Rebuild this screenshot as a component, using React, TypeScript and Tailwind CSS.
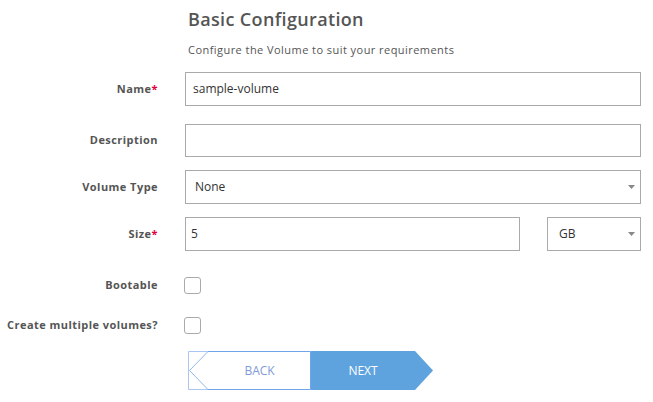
import React from "react";

const font = { fontFamily: '"Open Sans", "Noto Sans", sans-serif' };

function Label({ text, required }: { text: string; required?: boolean }) {
  return (
    <div className="w-[158px] shrink-0 text-right text-[11px] font-bold tracking-[0.45px] text-[#555]">
      {text}
      {required && <span className="text-[#e4003a]">*</span>}
    </div>
  );
}

function Caret() {
  return (
    <svg width="7" height="4" viewBox="0 0 7 4" className="absolute right-[5px] top-1/2 -translate-y-1/2">
      <path d="M0 0 H7 L3.5 4 Z" fill="#888" />
    </svg>
  );
}

function Checkbox() {
  return <div className="h-[17px] w-[17px] rounded-[3px] border border-[#aaa] bg-white" />;
}

export default function App() {
  return (
    <div style={font} className="h-[402px] w-[653px] bg-white text-[#333]">
      <div className="pl-[188px] pt-[5px]">
        <h1 className="text-[18px] font-semibold leading-[28px] tracking-[0.35px] text-[#555]">
          Basic Configuration
        </h1>
        <p className="mt-[9px] text-[11px] leading-[16px] tracking-[0.45px] text-[#555]">
          Configure the Volume to suit your requirements
        </p>
      </div>

      <div className="mt-[14px] flex flex-col">
        {/* Name */}
        <div className="flex items-center gap-[27px]">
          <Label text="Name" required />
          <div className="flex h-[34px] w-[456px] items-center border border-[#aaa] px-[7px] text-[12px]">
            sample-volume
          </div>
        </div>

        {/* Description */}
        <div className="mt-[18px] flex items-center gap-[27px]">
          <Label text="Description" />
          <div className="h-[33px] w-[456px] border border-[#aaa]" />
        </div>

        {/* Volume Type */}
        <div className="mt-[13px] flex items-center gap-[27px]">
          <Label text="Volume Type" />
          <div className="relative flex h-[34px] w-[456px] items-center border border-[#aaa] px-[9px] text-[12px]">
            None
            <Caret />
          </div>
        </div>

        {/* Size */}
        <div className="mt-[13px] flex items-center gap-[27px]">
          <Label text="Size" required />
          <div className="flex items-center gap-[27px]">
            <div className="flex h-[34px] w-[335px] items-center border border-[#aaa] px-[5px] text-[12px]">5</div>
            <div className="relative flex h-[34px] w-[94px] items-center border border-[#aaa] px-[11px] text-[12px]">
              GB
              <Caret />
            </div>
          </div>
        </div>

        {/* Bootable */}
        <div className="mt-[26px] flex items-center gap-[26px]">
          <Label text="Bootable" />
          <Checkbox />
        </div>

        {/* Multiple */}
        <div className="mt-[23px] flex items-center gap-[26px]">
          <Label text="Create multiple volumes?" />
          <Checkbox />
        </div>

        {/* Buttons */}
        <div className="ml-[188px] mt-[17px] flex">
          <button className="relative flex h-[39px] w-[123px] items-center justify-center text-[12px] text-[#7f9bd8]">
            <svg width="123" height="39" viewBox="0 0 123 39" className="absolute inset-0">
              <path d="M0.5 0.5 V38.5 H20" fill="none" stroke="#a9c6f2" strokeWidth="1" />
              <path d="M0.5 0.5 H20" fill="none" stroke="#a9c6f2" strokeWidth="1" />
              <path d="M20 0.5 H122.5 V38.5 H20" fill="none" stroke="#6fa3ea" strokeWidth="1" />
              <path d="M20 0.5 L1.5 19.5 L20 38.5" fill="none" stroke="#8fb8ee" strokeWidth="1" />
            </svg>
            <span className="relative ml-[20px]">BACK</span>
          </button>
          <button className="relative flex h-[39px] w-[122px] items-center justify-center text-[12px] text-white">
            <svg width="122" height="39" viewBox="0 0 122 39" className="absolute inset-0">
              <path d="M0 0 H104 L122 19.5 L104 39 H0 Z" fill="#5ea3de" />
            </svg>
            <span className="relative mr-[18px]">NEXT</span>
          </button>
        </div>
      </div>
    </div>
  );
}
